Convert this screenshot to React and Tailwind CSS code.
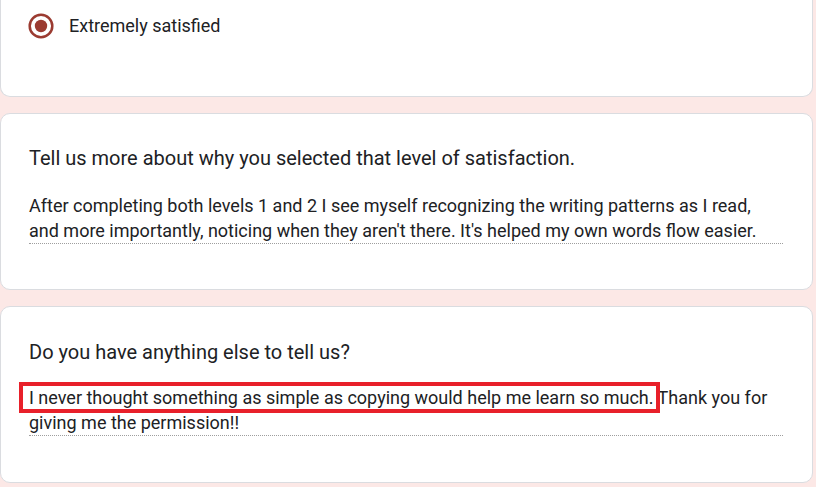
import React from "react";

const Card = ({ className = "", children }) => (
  <div className={"bg-white rounded-[10px] border border-[#dadce0] " + className}>
    {children}
  </div>
);

const Answer = ({ children }) => (
  <div className="w-[754px] text-[18px] leading-[25px] text-[#202124] border-b border-dotted border-[#9e9e9e]">
    {children}
  </div>
);

export default function App() {
  return (
    <div
      className="min-h-screen bg-[#fce8e6] pr-[3px] flex flex-col gap-[16px]"
      style={{ fontFamily: "Roboto, 'Noto Sans', Arial, sans-serif" }}
    >
      {/* Satisfaction question (scrolled) */}
      <Card className="-mt-[12px] h-[109px] rounded-t-none border-t-0 pl-[27px] pt-[24px]">
        <div className="flex items-center gap-[15px]">
          <svg width="26" height="26" viewBox="0 0 26 26">
            <circle cx="13" cy="13" r="11.3" fill="none" stroke="#9b3b31" strokeWidth="2.5" />
            <circle cx="13" cy="13" r="6.2" fill="#9b3b31" />
          </svg>
          <span className="text-[18px] text-[#202124]">Extremely satisfied</span>
        </div>
      </Card>

      {/* Why question */}
      <Card className="h-[177px] pl-[28px] pt-[30px]">
        <div className="text-[20px] leading-[28px] text-[#202124]">
          Tell us more about why you selected that level of satisfaction.
        </div>
        <div className="mt-[21px]">
          <Answer>
            After completing both levels 1 and 2 I see myself recognizing the writing patterns as I read,
            and more importantly, noticing when they aren't there. It's helped my own words flow easier.
          </Answer>
        </div>
      </Card>

      {/* Anything else */}
      <Card className="h-[177px] pl-[28px] pt-[31px]">
        <div className="text-[20px] leading-[28px] text-[#202124]">
          Do you have anything else to tell us?
        </div>
        <div className="mt-[19px]">
          <Answer>
            <span className="-ml-[6px] pl-[6px] -mr-[3px] pr-[3px] py-[1px] outline-4 outline-solid outline-[#e8202a]">
              I never thought something as simple as copying would help me learn so much.
            </span>{" "}
            Thank you for giving me the permission!!
          </Answer>
        </div>
      </Card>
    </div>
  );
}
